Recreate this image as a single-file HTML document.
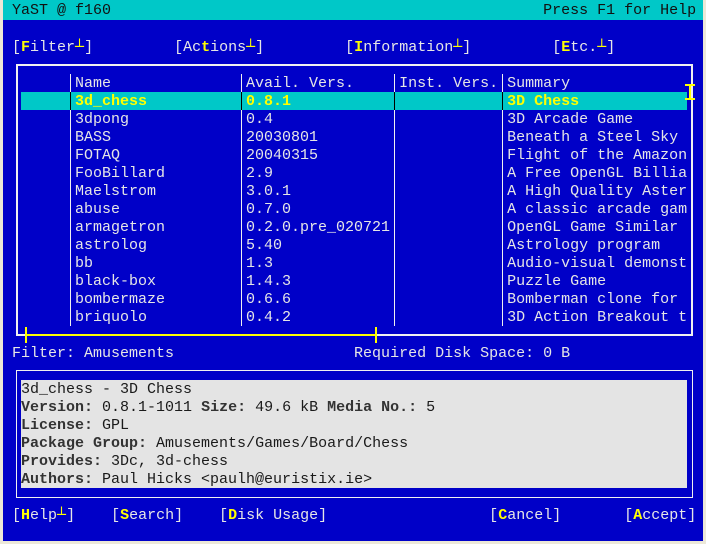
<!DOCTYPE html>
<html><head><meta charset="utf-8"><style>
*{margin:0;padding:0;box-sizing:border-box}
body{width:706px;height:544px;background:#ece8d8;position:relative;overflow:hidden;font-family:"Liberation Mono",monospace;font-size:15px;}
#scr{position:absolute;left:3px;top:0;width:700px;height:541px;background:#0000c8;}
.r{position:absolute;left:3px;height:18px;line-height:20px;white-space:pre;color:#e6e6e6;}
.y{color:#ffff00}
.k{color:#ffff00;font-weight:bold}
.hl{position:absolute;background:#00c8c8}
.ln{position:absolute;background:#f0f0f0}
.yl{position:absolute;background:#ffff00}
.g{color:#1a1a1a}
.b{font-weight:bold;color:#333}
</style></head><body>
<div id="scr"></div>
<div class="hl" style="left:3px;top:0;width:700px;height:20px"></div>
<div class="r" style="top:1px;color:#111"> YaST @ f160                                                Press F1 for Help</div>
<div class="r" style="top:38px"> [<span class="k">F</span>ilter<span class="k">┴</span>]         [Ac<span class="k">t</span>ions<span class="k">┴</span>]         [<span class="k">I</span>nformation<span class="k">┴</span>]         [<span class="k">E</span>tc.<span class="k">┴</span>]</div>
<div class="ln" style="left:16px;top:64px;width:677px;height:2px"></div>
<div class="ln" style="left:16px;top:64px;width:2px;height:272px"></div>
<div class="ln" style="left:691px;top:64px;width:2px;height:272px"></div>
<div class="ln" style="left:376px;top:334px;width:317px;height:2px"></div>
<div class="ln" style="left:16px;top:334px;width:9px;height:2px"></div>
<div class="yl" style="left:25px;top:334px;width:352px;height:2px"></div>
<div class="yl" style="left:25px;top:327px;width:2px;height:16px"></div>
<div class="yl" style="left:375px;top:327px;width:2px;height:16px"></div>
<div class="hl" style="left:21px;top:92px;width:666px;height:18px"></div>
<div class="ln" style="left:70px;top:74px;width:1px;height:252px"></div>
<div class="ln" style="left:241px;top:74px;width:1px;height:252px"></div>
<div class="ln" style="left:394px;top:74px;width:1px;height:252px"></div>
<div class="ln" style="left:502px;top:74px;width:1px;height:252px"></div>
<div style="position:absolute;left:70px;top:92px;width:1px;height:18px;background:#000"></div>
<div style="position:absolute;left:241px;top:92px;width:1px;height:18px;background:#000"></div>
<div style="position:absolute;left:394px;top:92px;width:1px;height:18px;background:#000"></div>
<div style="position:absolute;left:502px;top:92px;width:1px;height:18px;background:#000"></div>
<div class="yl" style="left:689px;top:84px;width:2px;height:16px"></div>
<div class="yl" style="left:685px;top:84px;width:10px;height:2px"></div>
<div class="yl" style="left:685px;top:98px;width:10px;height:2px"></div>
<div class="r" style="top:74px">        Name               Avail. Vers.     Inst. Vers. Summary</div>
<div class="r y" style="top:92px;font-weight:bold">        3d_chess           0.8.1                        3D Chess</div>
<div class="r" style="top:110px">        3dpong             0.4                          3D Arcade Game</div>
<div class="r" style="top:128px">        BASS               20030801                     Beneath a Steel Sky</div>
<div class="r" style="top:146px">        FOTAQ              20040315                     Flight of the Amazon</div>
<div class="r" style="top:164px">        FooBillard         2.9                          A Free OpenGL Billia</div>
<div class="r" style="top:182px">        Maelstrom          3.0.1                        A High Quality Aster</div>
<div class="r" style="top:200px">        abuse              0.7.0                        A classic arcade gam</div>
<div class="r" style="top:218px">        armagetron         0.2.0.pre_020721             OpenGL Game Similar</div>
<div class="r" style="top:236px">        astrolog           5.40                         Astrology program</div>
<div class="r" style="top:254px">        bb                 1.3                          Audio-visual demonst</div>
<div class="r" style="top:272px">        black-box          1.4.3                        Puzzle Game</div>
<div class="r" style="top:290px">        bombermaze         0.6.6                        Bomberman clone for</div>
<div class="r" style="top:308px">        briquolo           0.4.2                        3D Action Breakout t</div>
<div class="r" style="top:344px"> Filter: Amusements                    Required Disk Space: 0 B</div>
<div class="ln" style="left:16px;top:370px;width:677px;height:1px"></div>
<div class="ln" style="left:16px;top:497px;width:677px;height:1px"></div>
<div class="ln" style="left:16px;top:370px;width:1px;height:128px"></div>
<div class="ln" style="left:692px;top:370px;width:1px;height:128px"></div>
<div style="position:absolute;left:21px;top:380px;width:666px;height:108px;background:#e4e4e4"></div>
<div class="r g" style="top:380px">  3d_chess - 3D Chess</div>
<div class="r g" style="top:398px">  <span class="b">Version:</span> 0.8.1-1011 <span class="b">Size:</span> 49.6 kB <span class="b">Media No.:</span> 5</div>
<div class="r g" style="top:416px">  <span class="b">License:</span> GPL</div>
<div class="r g" style="top:434px">  <span class="b">Package Group:</span> Amusements/Games/Board/Chess</div>
<div class="r g" style="top:452px">  <span class="b">Provides:</span> 3Dc, 3d-chess</div>
<div class="r g" style="top:470px">  <span class="b">Authors:</span> Paul Hicks &lt;paulh@euristix.ie&gt;</div>
<div class="r" style="top:506px"> [<span class="k">H</span>elp<span class="k">┴</span>]    [<span class="k">S</span>earch]    [<span class="k">D</span>isk Usage]                  [<span class="k">C</span>ancel]       [<span class="k">A</span>ccept]</div>
</body></html>
